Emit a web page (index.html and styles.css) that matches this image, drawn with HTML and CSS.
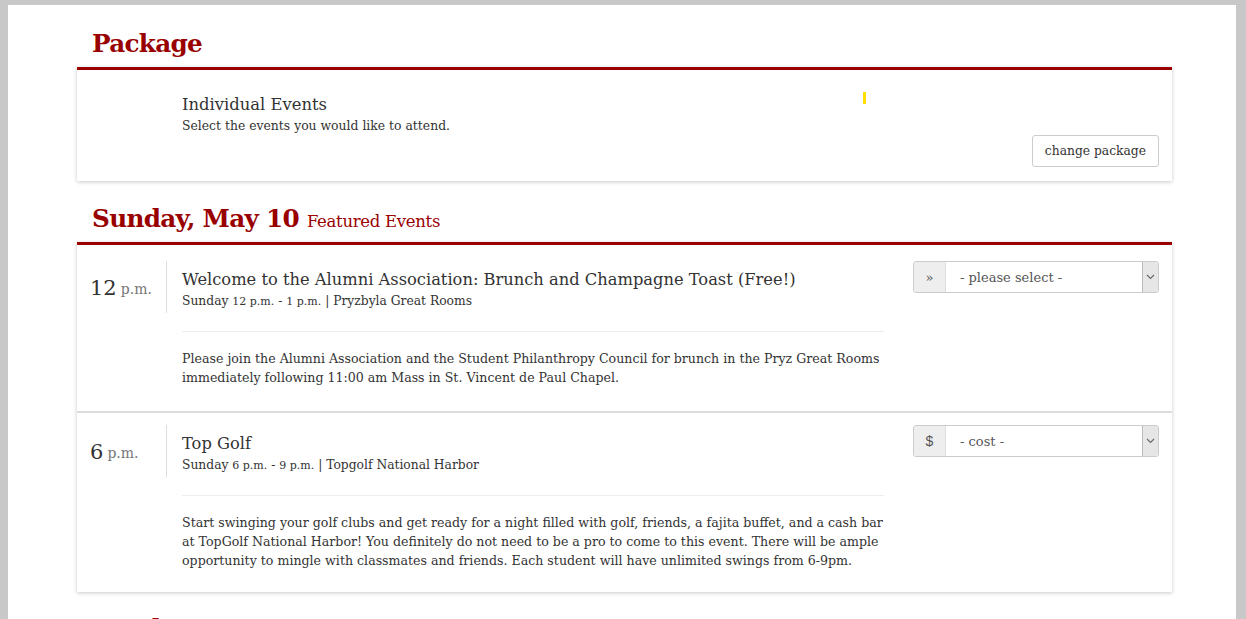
FILE: index.html
```html
<!DOCTYPE html>
<html>
<head>
<meta charset="UTF-8">
<title>Registration - Events</title>
<link rel="stylesheet" href="styles.css">
</head>
<body>
<div class="sheet">
<div class="wrap">

<h2 class="section-title">Package</h2>
<div class="panel package">
  <div class="package-info">
    <div class="package-name">Individual Events</div>
    <div class="package-desc">Select the events you would like to attend.</div>
  </div>
  <span class="marker"></span>
  <button class="btn">change package</button>
</div>

<h2 class="section-title">Sunday, May 10 <small>Featured Events</small></h2>
<div class="panel">
  <div class="event">
    <div class="event-time">12 <span class="ampm">p.m.</span></div>
    <div class="event-main">
      <div class="event-head">
        <div class="event-name">Welcome to the Alumni Association: Brunch and Champagne Toast (Free!)</div>
        <div class="event-meta">Sunday <span class="sm">12 p.m.</span> - <span class="sm">1 p.m.</span> | Pryzbyla Great Rooms</div>
      </div>
      <p class="event-desc">Please join the Alumni Association and the Student Philanthropy Council for brunch in the Pryz Great Rooms immediately following 11:00 am Mass in St. Vincent de Paul Chapel.</p>
    </div>
    <div class="event-pick">
      <div class="input-group">
        <span class="addon">&raquo;</span>
        <span class="fake-select">- please select -</span>
        <span class="caret"><svg width="9" height="6" viewBox="0 0 9 6"><path d="M1 1l3.5 3.5L8 1" fill="none" stroke="#666" stroke-width="1.1"/></svg></span>
      </div>
    </div>
  </div>

  <div class="event">
    <div class="event-time">6 <span class="ampm">p.m.</span></div>
    <div class="event-main">
      <div class="event-head">
        <div class="event-name">Top Golf</div>
        <div class="event-meta">Sunday <span class="sm">6 p.m.</span> - <span class="sm">9 p.m.</span> | Topgolf National Harbor</div>
      </div>
      <p class="event-desc">Start swinging your golf clubs and get ready for a night filled with golf, friends, a fajita buffet, and a cash bar at TopGolf National Harbor! You definitely do not need to be a pro to come to this event. There will be ample opportunity to mingle with classmates and friends. Each student will have unlimited swings from 6-9pm.</p>
    </div>
    <div class="event-pick">
      <div class="input-group">
        <span class="addon dollar">$</span>
        <span class="fake-select">- cost -</span>
        <span class="caret"><svg width="9" height="6" viewBox="0 0 9 6"><path d="M1 1l3.5 3.5L8 1" fill="none" stroke="#666" stroke-width="1.1"/></svg></span>
      </div>
    </div>
  </div>
</div>

<h2 class="section-title next">Sunday, May 10 <small>Events</small></h2>

</div>
</div>
</body>
</html>
```

FILE: styles.css
```css
/* page frame */
html, body {
    margin: 0;
    padding: 0;
}
body {
    background: #c8c8c8;
    font-family: "DejaVu Serif", "Liberation Serif", serif;
    font-size: 13px;
    color: #333;
    overflow: hidden;
}
.sheet {
    background: #fff;
    margin: 5px 10px 0 8px;
    min-height: 700px;
}
.wrap {
    width: 1095px;
    padding: 23px 0 0 69px;
}

/* headings */
.section-title {
    margin: 0 0 4px;
    padding-left: 15px;
    font-size: 24.7px;
    line-height: 32px;
    font-weight: bold;
    color: #990000;
    letter-spacing: -0.7px;
}
.section-title small {
    font-size: 16.5px;
    font-weight: normal;
    letter-spacing: -0.3px;
}
.section-title.next {
    margin-top: 1px;
}

.panel {
    border-top: 3px solid #990000;
    background: #fff;
    box-shadow: 0 1px 4px rgba(0,0,0,0.22);
    margin-bottom: 21px;
}
.panel.package {
    margin-top: 7px;
    margin-bottom: 22px;
}

/* package box */
.package {
    display: flex;
    align-items: flex-start;
    height: 114px;
    padding: 0 13px 0 105px;
    box-sizing: border-box;
    position: relative;
}
.package-info {
    flex: 1;
    padding-top: 24px;
}
.package-name {
    font-size: 16.4px;
    line-height: 22px;
}
.package-desc {
    font-size: 12.4px;
    line-height: 20px;
}
.marker {
    position: absolute;
    left: 786px;
    top: 22px;
    width: 3px;
    height: 12px;
    background: #ffe000;
}
.btn {
    align-self: flex-end;
    margin-bottom: 14px;
    height: 32px;
    padding: 0 12px;
    background: #fff;
    border: 1px solid #ccc;
    border-radius: 3px;
    font-family: inherit;
    font-size: 12.3px;
    color: #333;
}

/* events */
.event {
    display: grid;
    grid-template-columns: 89px 718px 275px;
    padding: 16px 0 24px;
}
.event + .event {
    border-top: 2px solid #ddd;
    padding-top: 12px;
    padding-bottom: 22px;
}
.event-time {
    height: 52px;
    display: flex;
    align-items: center;
    padding-left: 13px;
    padding-top: 1px;
    box-sizing: border-box;
    font-size: 21px;
    color: #333;
}
.ampm {
    font-size: 14px;
    color: #777;
    margin-left: 4px;
    padding-top: 3px;
}
.event-head {
    border-left: 1px solid #ddd;
    padding: 8px 0 2px 15px;
    height: 42px;
}
.event-name {
    font-size: 16.3px;
    line-height: 22px;
}
.event-meta {
    font-size: 12.3px;
    line-height: 20px;
}
.sm {
    font-size: 11px;
}
.event-desc {
    margin: 18px 0 0 16px;
    padding-top: 17px;
    border-top: 1px solid #eee;
    line-height: 19px;
    font-size: 12.6px;
}
.event-pick {
    padding-left: 29px;
}

/* select group */
.input-group {
    display: flex;
    height: 32px;
    border: 1px solid #ccc;
    border-radius: 3px;
    box-sizing: border-box;
    overflow: hidden;
}
.addon {
    width: 31px;
    background: #eee;
    border-right: 1px solid #ddd;
    display: flex;
    align-items: center;
    justify-content: center;
    color: #555;
    font-size: 13px;
}
.addon.dollar {
    font-family: "Liberation Sans", sans-serif;
    font-size: 14px;
}
.fake-select {
    flex: 1;
    display: flex;
    align-items: center;
    padding-left: 14px;
    color: #555;
    font-size: 13px;
}
.caret {
    width: 15px;
    background: #e6e6e6;
    border-left: 1px solid #bbb;
    display: flex;
    align-items: center;
    justify-content: center;
}
```
